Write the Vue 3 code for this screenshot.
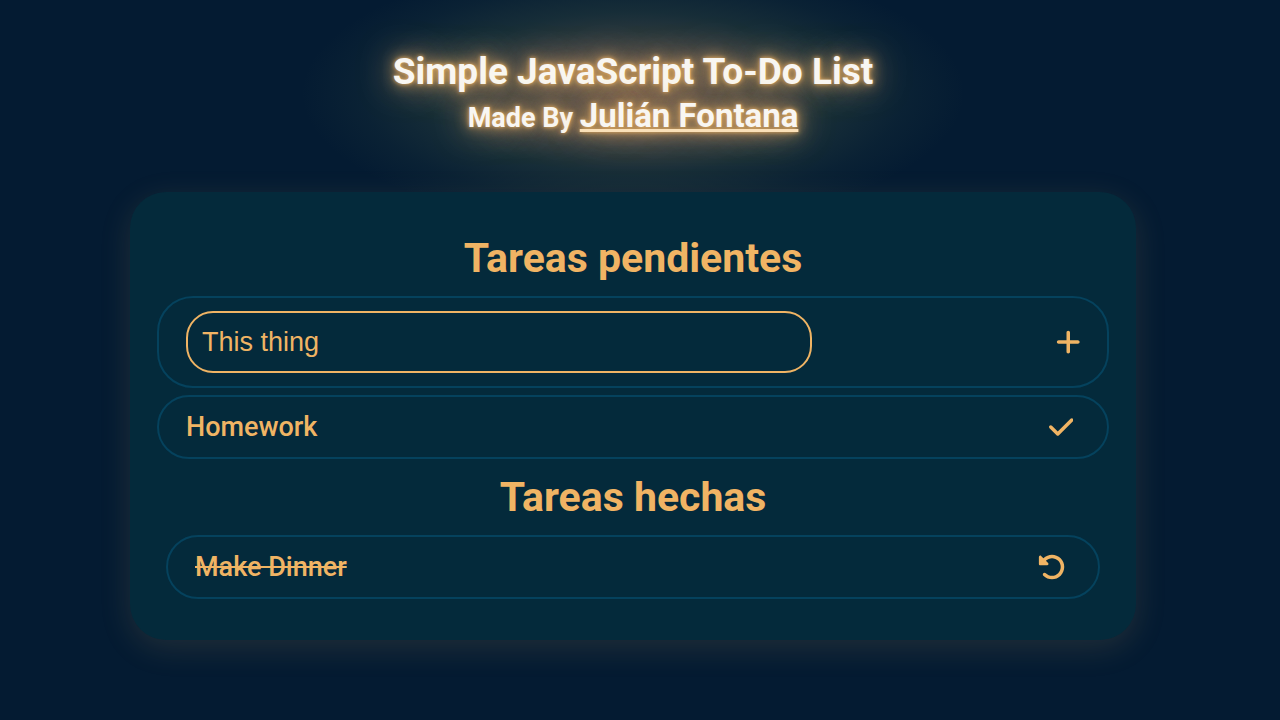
<script setup>
import { ref } from 'vue'

const draft = ref('This thing')
const pending = ref(['Homework'])
const done = ref(['Make Dinner'])

function addTask() {
  const text = draft.value.trim()
  if (!text) return
  pending.value.push(text)
  draft.value = ''
}

function finishTask(index) {
  done.value.push(...pending.value.splice(index, 1))
}

function restoreTask(index) {
  pending.value.push(...done.value.splice(index, 1))
}
</script>

<template>
  <div class="page">
    <header class="header">
      <h1 class="title">Simple JavaScript To-Do List</h1>
      <h2 class="author">Made By <a class="author-link" href="#">Julián Fontana</a></h2>
    </header>

    <main class="card">
      <section>
        <h2 class="heading">Tareas pendientes</h2>
        <form class="row row-form" @submit.prevent="addTask">
          <input v-model="draft" class="field" type="text" aria-label="Nueva tarea" />
          <button class="action action-add" type="submit" aria-label="Agregar tarea">
            <svg class="icon" viewBox="0 0 448 512" aria-hidden="true">
              <path d="M256 80c0-17.7-14.3-32-32-32s-32 14.3-32 32V224H48c-17.7 0-32 14.3-32 32s14.3 32 32 32H192V432c0 17.7 14.3 32 32 32s32-14.3 32-32V288H400c17.7 0 32-14.3 32-32s-14.3-32-32-32H256V80z" />
            </svg>
          </button>
        </form>
        <ul class="list">
          <li v-for="(task, index) in pending" :key="index" class="row">
            <span class="task">{{ task }}</span>
            <button class="action" type="button" aria-label="Completar tarea" @click="finishTask(index)">
              <svg class="icon" viewBox="0 0 448 512" aria-hidden="true">
                <path d="M438.6 105.4c12.5 12.5 12.5 32.8 0 45.3l-256 256c-12.5 12.5-32.8 12.5-45.3 0l-128-128c-12.5-12.5-12.5-32.8 0-45.3s32.8-12.5 45.3 0L160 338.7 393.4 105.4c12.5-12.5 32.8-12.5 45.3 0z" />
              </svg>
            </button>
          </li>
        </ul>
      </section>

      <section>
        <h2 class="heading">Tareas hechas</h2>
        <ul class="list list-done">
          <li v-for="(task, index) in done" :key="index" class="row">
            <s class="task">{{ task }}</s>
            <button class="action action-undo" type="button" aria-label="Restaurar tarea" @click="restoreTask(index)">
              <svg class="icon" viewBox="0 0 512 512" aria-hidden="true">
                <path d="M48.5 224H40c-13.3 0-24-10.7-24-24V72c0-9.7 5.8-18.5 14.8-22.2s19.3-1.7 26.2 5.2L98.6 96.6c87.6-86.5 228.7-86.2 315.8 1c87.5 87.5 87.5 229.3 0 316.8s-229.3 87.5-316.8 0c-12.5-12.5-12.5-32.8 0-45.3s32.8-12.5 45.3 0c62.5 62.5 163.8 62.5 226.3 0s62.5-163.8 0-226.3c-62.2-62.2-162.7-62.5-225.3-1L185 183c6.9 6.9 8.9 17.2 5.2 26.2s-12.5 14.8-22.2 14.8H48.5z" />
              </svg>
            </button>
          </li>
        </ul>
      </section>
    </main>
  </div>
</template>

<style>
body {
  margin: 0;
  background: #041b32;
}
</style>

<style scoped>
.page {
  box-sizing: border-box;
  min-height: 100vh;
  padding: 48px 144px 80px 130px;
  background: #041b32;
  color: #f0b464;
  font-family: Roboto, sans-serif;
  overflow: hidden;
}

.header {
  position: relative;
  isolation: isolate;
  margin-bottom: 54px;
  color: #f8f6f2;
  text-align: center;
  text-shadow:
    0 0 4px #f0b464,
    0 0 14px #f0b464,
    0 0 36px #f0b07a;
}

/* Wide soft halo behind the two heading lines */
.header::before {
  content: "";
  position: absolute;
  z-index: -1;
  inset: -90px 17%;
  background: radial-gradient(
    closest-side,
    rgb(220 160 110 / 0.36) 0%,
    rgb(200 160 110 / 0.26) 32%,
    rgb(130 150 90 / 0.15) 60%,
    rgb(110 140 90 / 0.06) 82%,
    rgb(110 140 90 / 0) 100%
  );
}

.title {
  margin: 0;
  font-size: 37px;
  font-weight: 700;
  line-height: 48px;
}

.author {
  margin: 0;
  font-size: 27px;
  font-weight: 700;
  line-height: 40px;
}

.author-link {
  color: inherit;
  font-size: 33px;
  text-decoration: underline 3px #fae0b8;
}

.card {
  position: relative;
  padding: 40px 27px 41px;
  border-radius: 36px;
  background: #042a3b;
  box-shadow: 0 8px 32px #f0b46420;
}

.heading {
  margin: 0;
  font-size: 41px;
  font-weight: 700;
  line-height: 52px;
  text-align: center;
}

.list {
  display: flex;
  flex-direction: column;
  gap: 7px;
  margin: 7px 0 12px;
  padding: 0;
  list-style: none;
}

.list-done {
  margin: 12px 9px 0;
}

.row {
  box-sizing: border-box;
  display: flex;
  align-items: center;
  justify-content: space-between;
  min-height: 64px;
  padding: 0 27px;
  border: 2px solid #05425d;
  border-radius: 36px;
}

.row-form {
  min-height: 92px;
  margin-top: 12px;
}

.field {
  box-sizing: border-box;
  width: 70%;
  height: 62px;
  padding: 0 14px;
  border: 2px solid #f0b464;
  border-radius: 27px;
  outline: none;
  background: transparent;
  color: inherit;
  font-family: "Liberation Sans", Arial, sans-serif;
  font-size: 27px;
}

.task {
  font-size: 27px;
  font-weight: 500;
  line-height: 36px;
}

.action {
  display: flex;
  padding: 0 7px;
  border: 0;
  background: transparent;
  color: inherit;
  cursor: pointer;
}

.action-add {
  padding: 0;
}

.action-undo {
  padding: 0 5px;
}

.icon {
  display: block;
  height: 28px;
  fill: currentColor;
}
</style>
